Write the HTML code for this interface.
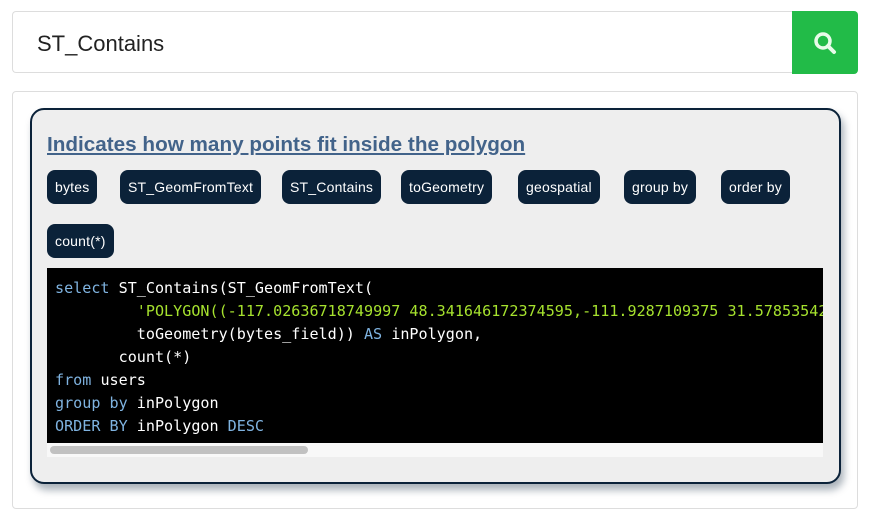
<!DOCTYPE html>
<html><head><style>
body{margin:0;width:872px;height:522px;background:#fff;font-family:"Liberation Sans",sans-serif;position:relative;overflow:hidden}
.search{position:absolute;left:12px;top:11px;width:780px;height:62px;border:1px solid #ddd;border-right:none;border-radius:4px 0 0 4px;box-sizing:border-box;font-size:22px;color:#222;padding:19px 0 0 24px}
.btn{position:absolute;left:792px;top:11px;width:66px;height:63px;background:#22bb48;border-radius:0 4px 4px 0}
.outer{position:absolute;left:12px;top:91px;width:846px;height:418px;border:1px solid #ddd;border-radius:4px;box-sizing:border-box}
.inner{position:absolute;left:30px;top:108px;width:811px;height:376px;border:2px solid #0b2239;border-radius:14px;background:#eee;box-sizing:border-box;box-shadow:3px 6px 8px rgba(11,34,57,.35)}
.title{position:absolute;left:15px;top:23px;font-size:20.7px;font-weight:bold;color:#42638a;text-decoration:underline;white-space:nowrap}
.tag{position:absolute;height:34px;line-height:34px;background:#0b2239;color:#fff;font-size:14px;letter-spacing:0.2px;border-radius:8px;padding:0 8px;white-space:nowrap}
.code{position:absolute;left:15px;top:158px;width:776px;height:175px;background:#000;font-family:"DejaVu Sans Mono",monospace;font-size:15.1px;line-height:23px;color:#fff;padding:9px 0 0 8px;box-sizing:border-box;white-space:pre;overflow:hidden}
.sb{position:absolute;left:15px;top:333px;width:776px;height:14px;background:#f8f8f8}
.sb div{position:absolute;left:3px;top:3px;width:258px;height:8px;border-radius:4px;background:#c1c1c1}
.k{color:#7fb3e0}.s{color:#a6e22e}
</style></head><body>
<div class="search">ST_Contains</div>
<div class="btn"><svg width="66" height="63" viewBox="0 0 66 63"><circle cx="31" cy="30" r="7" fill="none" stroke="#e8fbe9" stroke-width="3.5"/><line x1="36" y1="35" x2="42" y2="41" stroke="#e8fbe9" stroke-width="4" stroke-linecap="round"/></svg></div>
<div class="outer"></div>
<div class="inner">
<div class="title">Indicates how many points fit inside the polygon</div>
<div class="tag" style="left:15px;top:60px">bytes</div>
<div class="tag" style="left:88px;top:60px">ST_GeomFromText</div>
<div class="tag" style="left:250px;top:60px">ST_Contains</div>
<div class="tag" style="left:369px;top:60px">toGeometry</div>
<div class="tag" style="left:486px;top:60px">geospatial</div>
<div class="tag" style="left:592px;top:60px">group by</div>
<div class="tag" style="left:689px;top:60px">order by</div>
<div class="tag" style="left:15px;top:114px">count(*)</div>
<div class="code"><span class="k">select</span> ST_Contains(ST_GeomFromText(
         <span class="s">'POLYGON((-117.02636718749997 48.341646172374595,-111.9287109375 31.578535426</span>
         toGeometry(bytes_field)) <span class="k">AS</span> inPolygon,
       count(*)
<span class="k">from</span> users
<span class="k">group by</span> inPolygon
<span class="k">ORDER BY</span> inPolygon <span class="k">DESC</span></div>
<div class="sb"><div></div></div>
</div>
</body></html>
